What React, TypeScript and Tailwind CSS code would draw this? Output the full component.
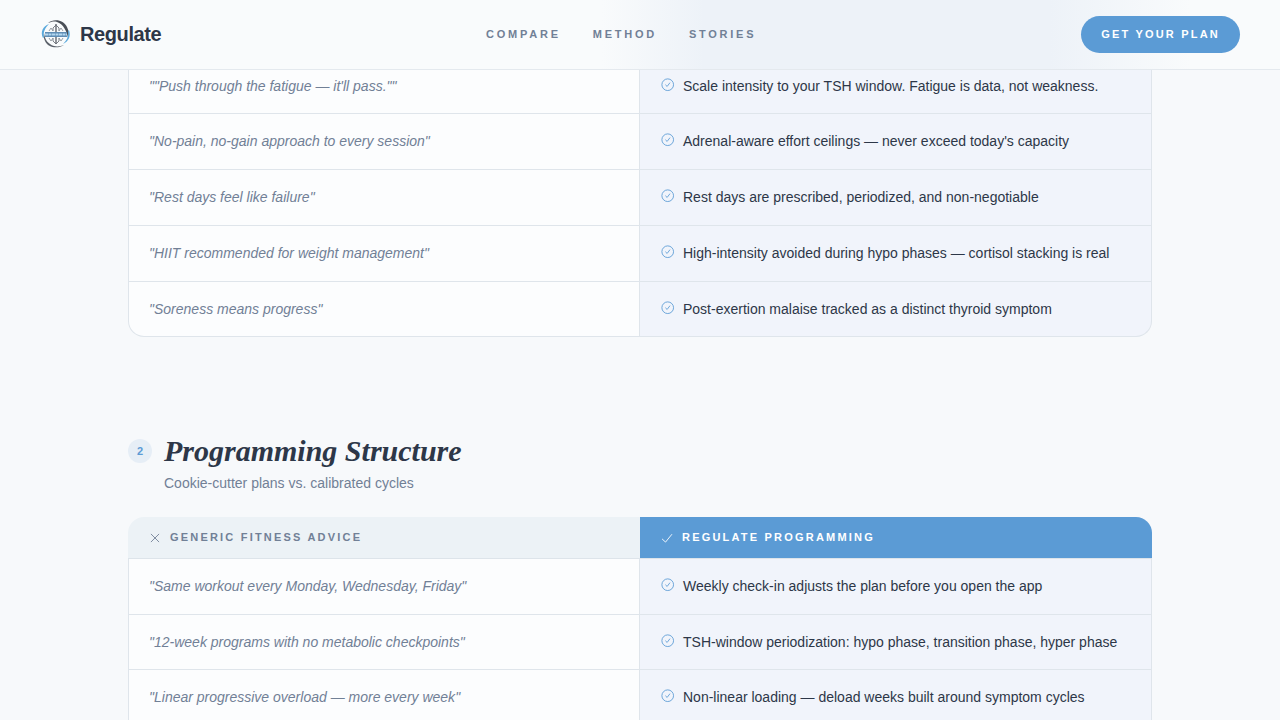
import React from 'react';

interface Comparison {
  generic: string;
  regulate: string;
}

interface ComparisonTableProps {
  rows: Comparison[];
  showLabels?: boolean;
  roundedBottom?: boolean;
}

const navLinks = [
  { label: 'Compare', href: '#compare' },
  { label: 'Method', href: '#method' },
  { label: 'Stories', href: '#stories' }
];

const intensityRows: Comparison[] = [
  {
    generic: '"Push through the fatigue — it\'ll pass."',
    regulate: 'Scale intensity to your TSH window. Fatigue is data, not weakness.'
  },
  {
    generic: 'No-pain, no-gain approach to every session',
    regulate: "Adrenal-aware effort ceilings — never exceed today's capacity"
  },
  {
    generic: 'Rest days feel like failure',
    regulate: 'Rest days are prescribed, periodized, and non-negotiable'
  },
  {
    generic: 'HIIT recommended for weight management',
    regulate: 'High-intensity avoided during hypo phases — cortisol stacking is real'
  },
  {
    generic: 'Soreness means progress',
    regulate: 'Post-exertion malaise tracked as a distinct thyroid symptom'
  }
];

const programmingRows: Comparison[] = [
  {
    generic: 'Same workout every Monday, Wednesday, Friday',
    regulate: 'Weekly check-in adjusts the plan before you open the app'
  },
  {
    generic: '12-week programs with no metabolic checkpoints',
    regulate: 'TSH-window periodization: hypo phase, transition phase, hyper phase'
  },
  {
    generic: 'Linear progressive overload — more every week',
    regulate: 'Non-linear loading — deload weeks built around symptom cycles'
  }
];

const CrossIcon: React.FC = () => (
  <svg viewBox="0 0 24 24" className="size-3.5 shrink-0" fill="none" stroke="currentColor" strokeWidth="1.5" aria-hidden="true">
    <path d="M5 5l14 14M19 5L5 19" />
  </svg>
);

const CheckIcon: React.FC = () => (
  <svg viewBox="0 0 24 24" className="size-3.5 shrink-0" fill="none" stroke="currentColor" strokeWidth="1.5" aria-hidden="true">
    <path d="M3.5 13.5L9.5 19 20.5 5.5" />
  </svg>
);

const CheckCircleIcon: React.FC = () => (
  <svg
    viewBox="0 0 24 24"
    className="mt-[3px] size-3.5 shrink-0 text-[#5b9bd5]"
    fill="none"
    stroke="currentColor"
    strokeWidth="1.5"
    aria-hidden="true"
  >
    <circle cx="11.5" cy="11.5" r="10" />
    <path d="M8 12l2.5 2.5 4.500-6" strokeLinecap="round" strokeLinejoin="round" />
  </svg>
);

const Logo: React.FC = () => (
  <svg viewBox="0 0 32 32" className="size-8" fill="none" aria-hidden="true">
    {/* outer swooshes */}
    <path d="M8 5C14 0 24 2 27 9c2 4 2 8 1 11C27 13 23 6 17 4c-3-1-6 0-9 1Z" fill="#4a4f57" />
    <path d="M24 27C18 31 8 30 5 23c-1-2-2-5-1-8 1 7 4 11 10 13 4 1 7 0 10-1Z" fill="#5c626b" />
    <path d="M3 20C0 14 3 8 9 6c-4 4-6 8-5 13Z" fill="#5aa9dc" />
    <path d="M29 12c2 6 0 11-6 14 4-4 6-8 5-13Z" fill="#5aa9dc" />
    {/* globe */}
    <path d="M16 6v20" stroke="#4a4f57" strokeWidth="1.2" />
    <path d="M16 7l-3 3v3M16 7l3 3v3M16 26l-3-3v-3M16 26l3-3v-3" stroke="#6b7079" strokeWidth="0.9" />
    <path d="M9 13l2-3 2 3M23 13l-2-3-2 3M9 20l2 3 2-3M23 20l-2 3-2-3" stroke="#8d939b" strokeWidth="0.9" />
    <path d="M5 14h22v5H5Z" fill="#5f8db5" />
    <path d="M5 16.5h22" stroke="#b4d8f0" strokeWidth="2.2" strokeDasharray="3 0.5" />
  </svg>
);

const Navbar: React.FC = () => (
  <header className="fixed inset-x-0 top-0 z-10 flex items-center justify-between border-b border-[#e4e9ee] bg-[linear-gradient(to_right,#f9fbfc_47%,#edf2f8_55%,#edf2f8_82%,#f9fbfc_93%)] px-10 py-4">
    <a href="#" className="flex items-center gap-2 text-xl font-bold tracking-[-0.02em] text-[#2d3748]">
      <Logo />
      Regulate
    </a>
    <nav className="flex gap-8 text-[11px] font-bold uppercase tracking-[0.25em] text-[#718096]">
      {navLinks.map((link) => (
        <a key={link.href} href={link.href}>
          {link.label}
        </a>
      ))}
    </nav>
    <button
      type="button"
      className="rounded-full bg-[#5b9bd5] px-5 py-2.5 text-[11px] leading-normal font-bold uppercase tracking-[0.2em] text-white"
    >
      Get your plan
    </button>
  </header>
);

const ComparisonTable: React.FC<ComparisonTableProps> = ({ rows, showLabels = true, roundedBottom = true }) => (
  <table className="w-full table-fixed border-separate border-spacing-0 text-left">
    <thead className="text-[11px] leading-normal uppercase tracking-[0.2em]">
      <tr>
        <th scope="col" className="rounded-tl-2xl border-b border-[#dde4ea] bg-[#ecf2f6] px-5 py-3 text-[#718096]">
          <span className="flex items-center gap-2">
            <CrossIcon />
            {showLabels && 'Generic fitness advice'}
          </span>
        </th>
        <th scope="col" className="rounded-tr-2xl border-b border-[#dde4ea] bg-[#5b9bd5] bg-clip-padding px-5 py-3 text-white">
          <span className="flex items-center gap-2">
            <CheckIcon />
            {showLabels ? 'Regulate programming' : <>&nbsp;</>}
          </span>
        </th>
      </tr>
    </thead>
    <tbody className="text-sm leading-relaxed">
      {rows.map((row, index) => {
        const isRounded = roundedBottom && index === rows.length - 1;
        return (
          <tr key={row.generic}>
            <td
              className={`border-x border-b border-[#dfe5eb] bg-[#fcfdfe] px-5 py-4 text-[#718096] italic ${
                isRounded ? 'rounded-bl-2xl' : ''
              }`}
            >
              "{row.generic}"
            </td>
            <td
              className={`border-r border-b border-[#dfe5eb] bg-[#f1f4fb] py-4 pr-5 pl-[21px] text-[#2d3748] ${
                isRounded ? 'rounded-br-2xl' : ''
              }`}
            >
              <span className="flex items-start gap-2">
                <CheckCircleIcon />
                {row.regulate}
              </span>
            </td>
          </tr>
        );
      })}
    </tbody>
  </table>
);

const App: React.FC = () => {
  return (
    <div className="h-screen overflow-hidden bg-[#f7f9fb] font-['Liberation_Sans',Arial,sans-serif] text-[#2d3748]">
      <Navbar />
      <main id="compare" className="mx-auto flex max-w-5xl flex-col gap-24 pt-[17px]">
        <section>
          <ComparisonTable rows={intensityRows} showLabels={false} />
        </section>

        <section>
          <div className="mb-6 flex gap-3">
            <span className="mt-1.5 flex size-6 items-center justify-center rounded-full bg-[#e6eef6] text-[11px] font-bold text-[#5b9bd5]">
              2
            </span>
            <div>
              <h2 className="font-['Liberation_Serif',serif] text-3xl font-bold italic">
                Programming Structure
              </h2>
              <p className="mt-1 text-sm text-[#718096]">Cookie-cutter plans vs. calibrated cycles</p>
            </div>
          </div>
          <ComparisonTable rows={programmingRows} roundedBottom={false} />
        </section>
      </main>
    </div>
  );
};

export default App;
